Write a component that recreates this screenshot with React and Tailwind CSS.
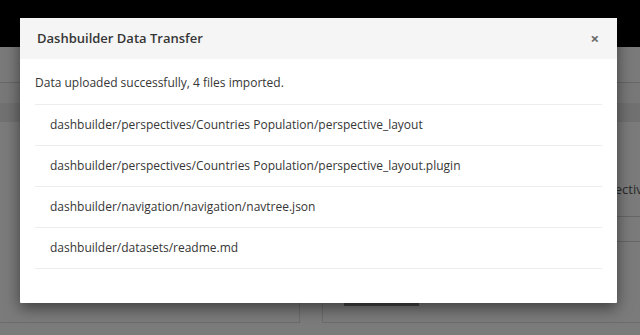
import React from "react";

const files = [
  "dashbuilder/perspectives/Countries Population/perspective_layout",
  "dashbuilder/perspectives/Countries Population/perspective_layout.plugin",
  "dashbuilder/navigation/navigation/navtree.json",
  "dashbuilder/datasets/readme.md",
];

export default function App() {
  return (
    <div
      className="relative w-[640px] h-[335px] overflow-hidden bg-[#7b7b7b]"
      style={{ fontFamily: '"Open Sans", "Noto Sans", sans-serif' }}
    >
      {/* dimmed page behind */}
      <div className="flex flex-col h-full">
        <div className="h-[47px] bg-black shrink-0" />
        <div className="h-[36px] shrink-0 bg-[#7a7a7a] border-b border-[#676767]" />
        <div className="h-[20px] shrink-0 bg-[#787878]" />
        <div className="h-[19px] shrink-0 bg-[#717171]" />
        <div className="flex flex-1 gap-[22px]">
          <div className="w-[300px] h-[201px] bg-[#7b7b7b] border-r border-b border-[#6c6c6c]" />
          <div className="flex-1 h-[201px] bg-[#7b7b7b] border-l border-b border-[#6c6c6c] flex flex-col">
            <div className="h-[48px]" />
            <div className="flex justify-end h-[46px] items-start">
              <span className="text-[13px] text-[#2a2a2a] whitespace-nowrap leading-[18px] mr-[-10px] pt-[10px]">Perspective</span>
            </div>
            <div className="h-[25px] border-t border-[#666]" />
            <div className="h-[1px] bg-[#666]" />
            <div className="flex-1" />
            <div className="ml-[21px] w-[75px] h-[20px] bg-[#444] mb-[16px]" />
          </div>
        </div>
      </div>

      {/* modal */}
      <div className="absolute left-[20px] top-[18px] w-[597px] bg-white rounded-[1px] shadow-[0_5px_15px_rgba(0,0,0,0.5)]">
        <div className="h-[41px] bg-[#f5f5f5] flex items-center justify-between pl-[17px] pr-[18px]">
          <span className="text-[13px] font-semibold text-[#363636]">Dashbuilder Data Transfer</span>
          <span className="text-[15px] font-bold text-[#6a6a6a] leading-none">×</span>
        </div>
        <div className="px-[15px] pt-[15px] pb-[34px]">
          <p className="text-[12px] leading-[18px] text-[#363636] mb-[12px]">
            Data uploaded successfully, 4 files imported.
          </p>
          <ul className="border-t border-[#ededed]">
            {files.map((f) => (
              <li
                key={f}
                className="h-[41px] border-b border-[#ededed] flex items-center pl-[15px] text-[12px] text-[#363636]"
              >
                {f}
              </li>
            ))}
          </ul>
        </div>
      </div>
    </div>
  );
}
